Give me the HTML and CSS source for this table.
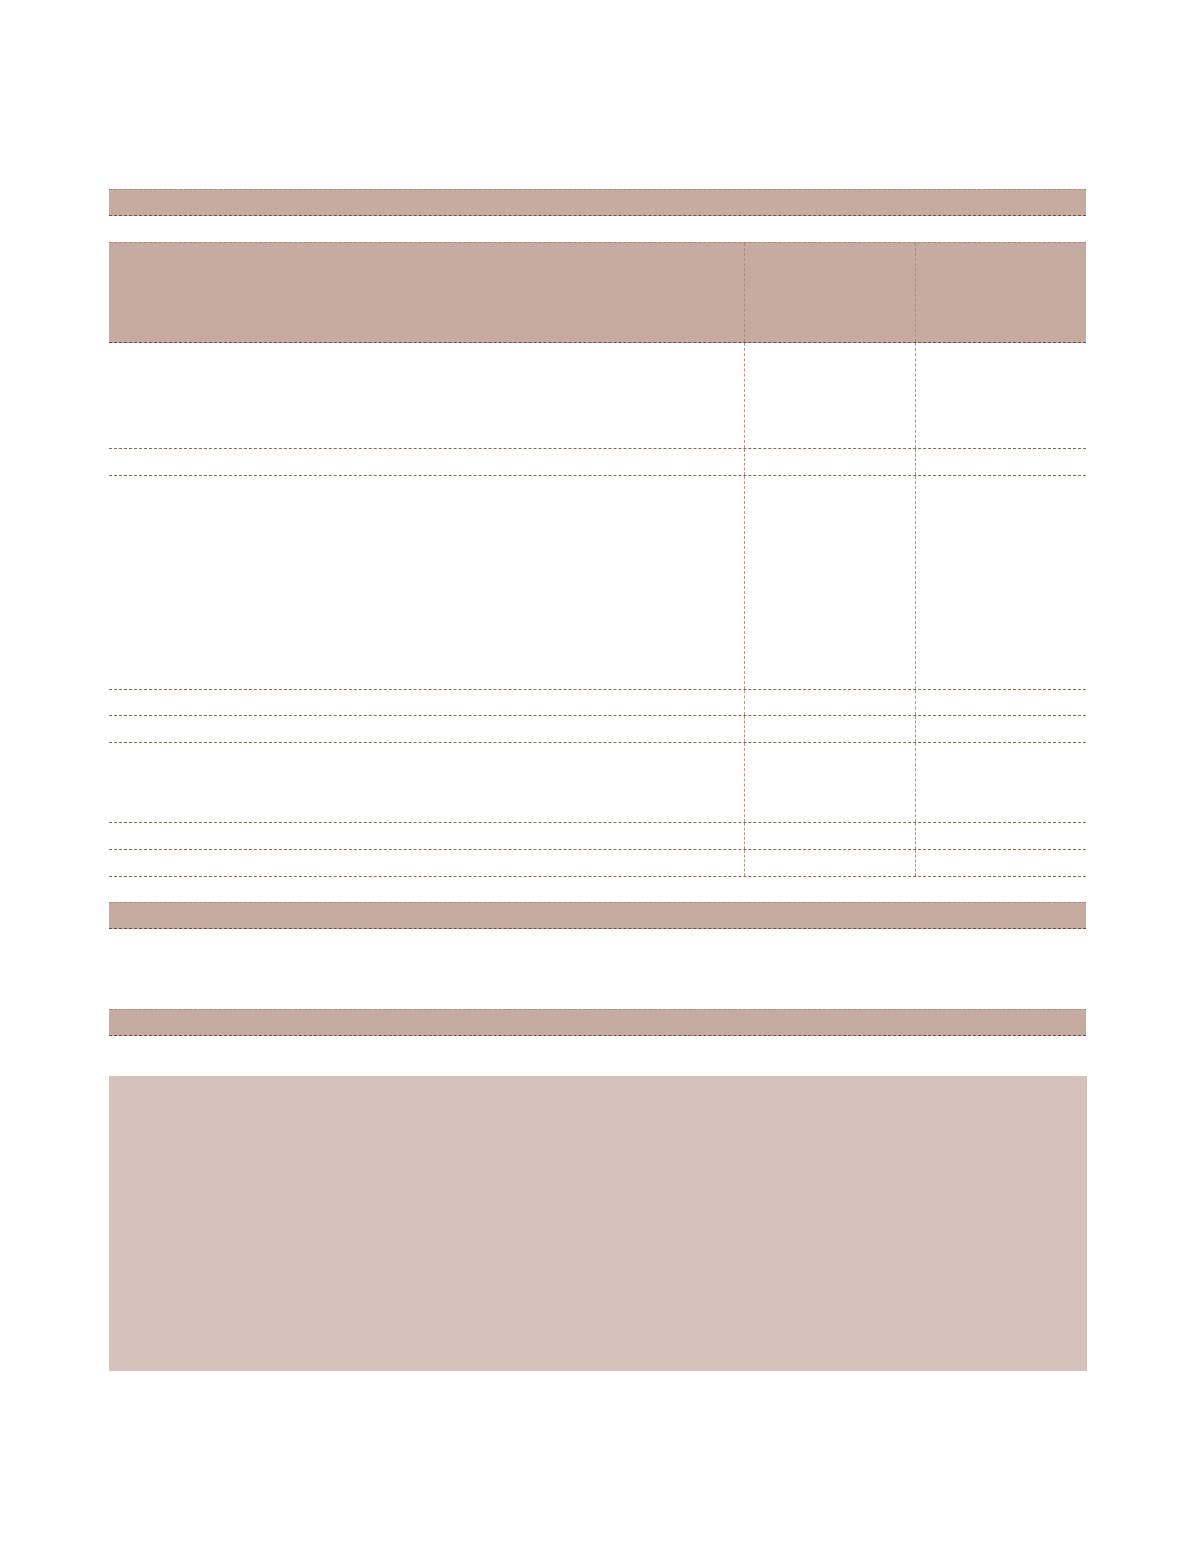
FILE: index.html
```html
<!DOCTYPE html>
<html>
<head>
<meta charset="utf-8">
<link rel="stylesheet" href="styles.css">
</head>
<body>
<div class="page">
  <div class="bar bar-first"></div>
  <div class="table">
    <div class="row head"><div class="cell"></div><div class="cell div"></div><div class="cell div"></div></div>
    <div class="row h106"><div class="cell"></div><div class="cell div"></div><div class="cell div"></div></div>
    <div class="row h27"><div class="cell"></div><div class="cell div"></div><div class="cell div"></div></div>
    <div class="row h214"><div class="cell"></div><div class="cell div"></div><div class="cell div"></div></div>
    <div class="row h26"><div class="cell"></div><div class="cell div"></div><div class="cell div"></div></div>
    <div class="row h27"><div class="cell"></div><div class="cell div"></div><div class="cell div"></div></div>
    <div class="row h80"><div class="cell"></div><div class="cell div"></div><div class="cell div"></div></div>
    <div class="row h27"><div class="cell"></div><div class="cell div"></div><div class="cell div"></div></div>
    <div class="row h27"><div class="cell"></div><div class="cell div"></div><div class="cell div"></div></div>
  </div>
  <div class="bar bar-second"></div>
  <div class="bar bar-third"></div>
  <div class="box"></div>
</div>
</body>
</html>
```
FILE: styles.css
```css
html, body {
  margin: 0;
  padding: 0;
  background: #ffffff;
  font-family: "Liberation Sans", Arial, sans-serif;
}
.page {
  width: 1194px;
  height: 1557px;
  box-sizing: border-box;
  padding: 189px 0 0 109px;
  display: flex;
  flex-direction: column;
}
.bar {
  width: 977px;
  height: 27px;
  box-sizing: border-box;
  background: #c6aca0;
  border-top: 1px dashed #a88a7e;
  border-bottom: 1px dashed #7b4a3c;
}
.table {
  margin-top: 26px;
  width: 977px;
  display: flex;
  flex-direction: column;
}
.row {
  display: grid;
  grid-template-columns: 635px 171px 171px;
  box-sizing: border-box;
  border-bottom: 1px dashed #8e6657;
}
.row.head {
  height: 101px;
  background: #c6aca0;
  border-top: 1px dashed #a88a7e;
  border-bottom-color: #7b4a3c;
}
.cell.div {
  border-left: 1px dashed #b09589;
}
.head .cell.div {
  border-left-color: #a88e83;
}
.h106 { height: 106px; }
.h27 { height: 27px; }
.h26 { height: 26px; }
.h214 { height: 214px; }
.h80 { height: 80px; }
.bar-second { margin-top: 25px; }
.bar-third { margin-top: 80px; }
.box {
  margin-top: 40px;
  width: 978px;
  height: 295px;
  background: #d6c2ba;
}
```
